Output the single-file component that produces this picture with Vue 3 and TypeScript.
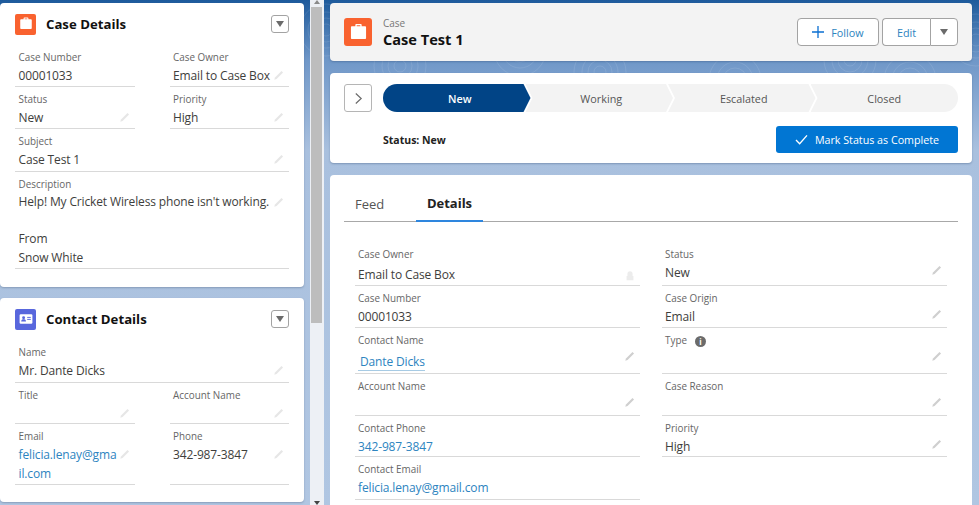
<script setup lang="ts">
interface Field { label: string; value?: string; lines?: string[]; link?: boolean; wide?: boolean; edit?: boolean; lock?: boolean; h: number; kind?: string }
const caseDetails: Field[] = [
  { label: 'Case Number', value: '00001033', h: 42 },
  { label: 'Case Owner', value: 'Email to Case Box', edit: true, h: 42 },
  { label: 'Status', value: 'New', edit: true, h: 42 },
  { label: 'Priority', value: 'High', edit: true, h: 42 },
  { label: 'Subject', value: 'Case Test 1', wide: true, edit: true, h: 43 },
  { label: 'Description', lines: ["Help! My Cricket Wireless phone isn't working.", '\u00a0', 'From', 'Snow White'], wide: true, edit: true, h: 97 },
]
const contactDetails: Field[] = [
  { label: 'Name', value: 'Mr. Dante Dicks', wide: true, edit: true, h: 43 },
  { label: 'Title', edit: true, h: 41 },
  { label: 'Account Name', edit: true, h: 41 },
  { label: 'Email', lines: ['felicia.lenay@gma', 'il.com'], link: true, edit: true, h: 61 },
  { label: 'Phone', value: '342-987-3847', edit: true, h: 61 },
]
const stages = ['New', 'Working', 'Escalated', 'Closed']
const leftCol: Field[] = [
  { label: 'Case Owner', value: 'Email to Case Box', lock: true, h: 44, kind: 'owner' },
  { label: 'Case Number', value: '00001033', h: 42 },
  { label: 'Contact Name', value: 'Dante Dicks', link: true, edit: true, h: 46, kind: 'under' },
  { label: 'Account Name', edit: true, h: 42 },
  { label: 'Contact Phone', value: '342-987-3847', link: true, h: 41 },
  { label: 'Contact Email', value: 'felicia.lenay@gmail.com', link: true, h: 43 },
]
const rightCol: Field[] = [
  { label: 'Status', value: 'New', edit: true, h: 44 },
  { label: 'Case Origin', value: 'Email', edit: true, h: 42 },
  { label: 'Type', edit: true, h: 46 },
  { label: 'Case Reason', edit: true, h: 42 },
  { label: 'Priority', value: 'High', edit: true, h: 41 },
]
const swirls = [
  { x: 400, y: 66 }, { x: 520, y: 50 }, { x: 600, y: 72 }, { x: 735, y: 80 },
  { x: 850, y: 60 }, { x: 910, y: 80 }, { x: 326, y: 30 }, { x: 976, y: 40 },
]
const rings = [6, 12, 18, 26]
</script>

<template>
  <div class="page">
    <svg class="swirls" viewBox="0 0 979 505" aria-hidden="true">
      <g v-for="(s, i) in swirls" :key="i">
        <circle v-for="r in rings" :key="r" :cx="s.x" :cy="s.y" :r="r" />
      </g>
    </svg>
    <aside class="side">
      <section class="card first">
        <header class="card-head">
          <span class="badge orange">
            <svg viewBox="0 0 20 20" width="16" height="16"><path fill="#fff" d="M7 4V2.800C7 2.200 7.400 2 8 2h4c.6 0 1 .2 1 .8V4h3.200c.6 0 1 .5 1 1v10.200c0 .6-.4 1-1 1H3.800c-.6 0-1-.4-1-1V5c0-.5.4-1 1-1H7zm1.300 0h3.400V3.200H8.300V4z"/></svg>
          </span>
          <h2>Case Details</h2>
          <button class="menu"><i></i></button>
        </header>
        <div class="grid">
          <div v-for="f in caseDetails" :key="f.label" class="cell" :class="{ wide: f.wide }" :style="{ height: f.h + 'px' }">
            <label>{{ f.label }}</label>
            <div v-if="f.lines" class="val"><div v-for="(l, i) in f.lines" :key="i">{{ l }}</div></div>
            <div v-else class="val">{{ f.value }}</div>
            <svg v-if="f.edit" class="pen" viewBox="0 0 14 14"><path d="M2.500 11.500l.7-2.400 7-7 1.700 1.700-7 7z" fill="#e6e6e6"/></svg>
          </div>
        </div>
      </section>
      <section class="card second">
        <header class="card-head">
          <span class="badge indigo">
            <svg viewBox="0 0 20 20" width="16" height="16"><rect x="2" y="4" width="16" height="12" rx="1.500" fill="#fff"/><circle cx="7" cy="8.500" r="1.800" fill="#5867dd"/><path d="M4 13c0-1.800 1.300-2.600 3-2.600s3 .8 3 2.600z" fill="#5867dd"/><path d="M11.500 8h4.500M11.500 10.500h4.500" stroke="#5867dd" stroke-width="1.200"/></svg>
          </span>
          <h2>Contact Details</h2>
          <button class="menu"><i></i></button>
        </header>
        <div class="grid">
          <div v-for="f in contactDetails" :key="f.label" class="cell" :class="{ wide: f.wide }" :style="{ height: f.h + 'px' }">
            <label>{{ f.label }}</label>
            <div v-if="f.lines" class="val link"><div v-for="(l, i) in f.lines" :key="i">{{ l }}</div></div>
            <div v-else class="val">{{ f.value }}</div>
            <svg v-if="f.edit" class="pen" viewBox="0 0 14 14"><path d="M2.500 11.500l.7-2.400 7-7 1.700 1.700-7 7z" fill="#e6e6e6"/></svg>
          </div>
        </div>
      </section>
    </aside>

    <div class="scrollbar">
      <span class="arrow up"></span>
      <span class="thumb"></span>
      <span class="arrow down"></span>
    </div>

    <main class="main">
      <section class="hero">
        <span class="hero-badge">
          <svg viewBox="0 0 20 20" width="21" height="21"><path fill="#fff" d="M7 4V2.800C7 2.200 7.400 2 8 2h4c.6 0 1 .2 1 .8V4h3.200c.6 0 1 .5 1 1v10.200c0 .6-.4 1-1 1H3.800c-.6 0-1-.4-1-1V5c0-.5.4-1 1-1H7zm1.300 0h3.400V3.200H8.300V4z"/></svg>
        </span>
        <div class="hero-title">
          <small>Case</small>
          <h1>Case Test 1</h1>
        </div>
        <div class="actions">
          <button class="btn follow">
            <svg viewBox="0 0 12 12" width="12" height="12"><path d="M6 0v12M0 6h12" stroke="#0b6fd1" stroke-width="1.300"/></svg>
            Follow
          </button>
          <div class="btn-group">
            <button class="btn edit">Edit</button>
            <button class="btn caret"><i></i></button>
          </div>
        </div>
      </section>

      <section class="path-card">
        <div class="path-row">
          <button class="toggle">
            <svg viewBox="0 0 10 14" width="9" height="13"><path d="M2 1.500L8 7l-6 5.500" fill="none" stroke="#6b6b6b" stroke-width="1.300"/></svg>
          </button>
          <ol class="path">
            <li v-for="(s, i) in stages" :key="s" :class="{ on: i === 0, last: i === 3 }">{{ s }}</li>
          </ol>
        </div>
        <div class="status-row">
          <strong>Status: New</strong>
          <button class="complete">
            <svg viewBox="0 0 14 12" width="13" height="11"><path d="M1 6.500L5 10.500 13 1.500" fill="none" stroke="#fff" stroke-width="1.500"/></svg>
            Mark Status as Complete
          </button>
        </div>
      </section>

      <section class="detail-card">
        <nav class="tabs">
          <span class="tab">Feed</span>
          <span class="tab active">Details</span>
        </nav>
        <div class="columns">
          <div class="col">
            <div v-for="f in leftCol" :key="f.label" class="row" :style="{ height: f.h + 'px' }">
              <label>{{ f.label }}</label>
              <div class="rval" :class="[f.kind, { link: f.link }]">{{ f.value }}</div>
              <svg v-if="f.edit" class="pen dark" viewBox="0 0 14 14"><path d="M2.500 11.500l.7-2.400 7-7 1.700 1.700-7 7z" fill="#cfcfcf"/></svg>
              <svg v-if="f.lock" class="pen lock" viewBox="0 0 14 14"><path d="M4 7V4.500a3 3 0 0 1 6 0V7h1v5H3V7z" fill="#ececec"/></svg>
            </div>
          </div>
          <div class="col">
            <div v-for="f in rightCol" :key="f.label" class="row" :style="{ height: f.h + 'px' }">
              <label>{{ f.label }}<span v-if="f.label === 'Type'" class="info">i</span></label>
              <div class="rval">{{ f.value }}</div>
              <svg v-if="f.edit" class="pen dark" viewBox="0 0 14 14"><path d="M2.500 11.500l.7-2.400 7-7 1.700 1.700-7 7z" fill="#cfcfcf"/></svg>
            </div>
          </div>
        </div>
      </section>
    </main>
  </div>
</template>

<style>
html, body { margin: 0; overflow: hidden; }
</style>

<style scoped>
* { box-sizing: border-box; }
.page {
  position: relative; width: 979px; height: 505px; overflow: hidden; display: flex;
  font-family: "Open Sans", "Noto Sans", sans-serif; color: #3e3e3c;
  background: linear-gradient(180deg, #1d5a9c 0, #6f97c8 60px, #a9c0de 150px, #b0c6e2 505px);
}
.swirls { position: absolute; left: 0; top: 0; width: 979px; height: 505px; }
.swirls circle { fill: none; stroke: rgba(255, 255, 255, .1); stroke-width: 1; }
h1, h2 { margin: 0; }
button { font-family: inherit; padding: 0; }

.side { position: relative; width: 304px; flex: none; padding-top: 3px; display: flex; flex-direction: column; gap: 11px; }
.card { background: #fff; border-radius: 4px; box-shadow: 0 1px 2px rgba(60, 80, 110, .35); }
.first { height: 284px; }
.second { height: 204px; }
.card-head { display: flex; align-items: center; height: 42px; padding: 0 15px; }
.badge { width: 21px; height: 21px; border-radius: 2px; display: grid; place-items: center; flex: none; }
.orange { background: #f9622f; }
.indigo { background: #5867dd; }
.card-head h2 { font-size: 13.200px; line-height: 18px; font-weight: 700; color: #111; margin-left: 10px; flex: 1; }
.menu { width: 18px; height: 18px; background: #fff; border: 1px solid #a3a3a3; border-radius: 3px; display: grid; place-items: center; }
.menu i { width: 0; height: 0; border: 4.500px solid transparent; border-top: 6px solid #6b6b6b; border-bottom: 0; }

.grid { display: grid; grid-template-columns: 120px 119.500px; column-gap: 34.500px; padding: 0 15px; justify-content: start; }
.cell { position: relative; border-bottom: 1px solid #d9d9d9; padding: 0 3.500px; }
.cell.wide { grid-column: 1 / -1; }
.cell label { display: block; font-size: 9.900px; line-height: 14px; color: #666; padding-top: 5px; height: 22px; }
.val { font-size: 12px; letter-spacing: -.14px; line-height: 18.700px; color: #3e3e3c; white-space: nowrap; }
.cell.wide:last-child .val { margin-top: -1px; }
.val.link { color: #2d84c0; }
.pen { position: absolute; width: 13px; height: 13px; right: 4px; top: 24px; }

.scrollbar { position: relative; width: 14px; flex: none; margin-left: 6px; background: #edf0f5; }
.thumb { position: absolute; left: 1px; right: 2px; top: 7px; height: 316px; background: #bdbdbd; }
.arrow { position: absolute; left: 4px; width: 0; height: 0; border: 3px solid transparent; }
.arrow.up { top: 0; border-bottom: 4px solid #8a8a8a; border-top: 0; }
.arrow.down { bottom: 0; border-top: 4px solid #444; border-bottom: 0; }

.main { position: relative; width: 642px; flex: none; margin-left: 6px; padding-top: 3px; display: flex; flex-direction: column; }
.hero { height: 58px; background: #f3f3f3; border-radius: 4px; display: flex; align-items: center; padding: 0 14px; box-shadow: 0 1px 2px rgba(40, 70, 110, .35); }
.hero-badge { width: 28px; height: 28px; border-radius: 3px; background: #f9622f; display: grid; place-items: center; flex: none; }
.hero-title { margin-left: 11px; flex: 1; display: flex; flex-direction: column; padding-top: 1px; }
.hero-title small { font-size: 10px; line-height: 13px; color: #777; }
.hero-title h1 { font-size: 14.600px; line-height: 18px; font-weight: 700; color: #111; }
.actions { display: flex; gap: 3px; align-items: center; }
.btn { height: 28px; background: #fff; border: 1px solid #a3a3a3; color: #2d84c0; font-size: 10.800px; display: flex; align-items: center; justify-content: center; }
.follow { width: 82px; border-radius: 4px; gap: 7px; }
.btn-group { display: flex; }
.edit { width: 48px; border-radius: 4px 0 0 4px; border-right: 0; }
.caret { width: 28px; border-radius: 0 4px 4px 0; }
.caret i { width: 0; height: 0; border: 4.500px solid transparent; border-top: 6px solid #6b6b6b; border-bottom: 0; }

.path-card { height: 90px; margin-top: 12px; background: #fff; border-radius: 4px; padding: 11px 14px 0 14px; box-shadow: 0 1px 2px rgba(40, 70, 110, .35); }
.path-row { display: flex; gap: 11px; }
.toggle { width: 28px; height: 28px; background: #fff; border: 1px solid #b5b5b5; border-radius: 3px; display: grid; place-items: center; flex: none; }
.path { list-style: none; margin: 0; padding: 0; display: flex; width: 575px; height: 28px; border-radius: 14px; overflow: hidden; }
.path li {
  flex: 1 0 147.500px; margin-right: -5px; padding-left: 4px; background: #f3f3f3; color: #555; font-size: 10.800px; line-height: 29px; text-align: center;
  clip-path: polygon(0 0, calc(100% - 7px) 0, 100% 50%, calc(100% - 7px) 100%, 0 100%, 7px 50%);
}
.path li:first-child { padding-left: 6px; clip-path: polygon(0 0, calc(100% - 7px) 0, 100% 50%, calc(100% - 7px) 100%, 0 100%); }
.path li.last { padding-left: 0; clip-path: polygon(0 0, 100% 0, 100% 100%, 0 100%, 7px 50%); margin-right: 0; }
.path li.on { background: #014486; color: #fff; font-weight: 600; }
.status-row { display: flex; align-items: center; justify-content: space-between; padding-left: 39px; margin-top: 14px; }
.status-row strong { font-size: 10.500px; font-weight: 700; color: #222; }
.complete { width: 182px; height: 27px; background: #0176d3; color: #fff; border: 0; border-radius: 3px; font-size: 10.700px; display: flex; align-items: center; justify-content: center; gap: 7px; }

.detail-card { flex: 1; margin-top: 12px; background: #fff; border-radius: 4px 4px 0 0; padding: 0 14px; }
.tabs { height: 47px; display: flex; align-items: flex-end; border-bottom: 1px solid #a8a8a8; }
.tab { font-size: 13px; line-height: 17px; height: 26px; padding-top: 1px; color: #555; width: 72px; padding-left: 11px; }
.tab.active { font-weight: 700; color: #222; border-bottom: 2px solid #2e86de; margin-bottom: -1px; height: 27px; width: 67px; padding: 0; text-align: center; }
.columns { display: flex; gap: 22px; padding: 20px 0 0 11px; }
.col { width: 285px; }
.row { position: relative; border-bottom: 1px solid #d9d9d9; padding: 0 3px; }
.row label { display: block; font-size: 9.900px; line-height: 14px; color: #666; height: 21px; padding-top: 4.500px; }
.info { display: inline-grid; place-items: center; width: 11px; height: 11px; border-radius: 50%; background: #6b6b6b; color: #fff; font-size: 8px; font-weight: 700; line-height: 1; margin-left: 8px; vertical-align: -1px; }
.rval { font-size: 12px; letter-spacing: -.14px; line-height: 19px; color: #3e3e3c; }
.rval.link { color: #2d84c0; }
.rval.under { display: inline-block; margin: 1px 0 0 0; padding: 0 0 0 2px; border-bottom: 1px solid #a7cbe4; line-height: 17px; }
.rval.owner { padding-top: 2px; }
.pen.dark { right: 4px; top: 22px; }
.pen.lock { right: 4px; top: 28px; width: 12px; height: 12px; }
</style>
